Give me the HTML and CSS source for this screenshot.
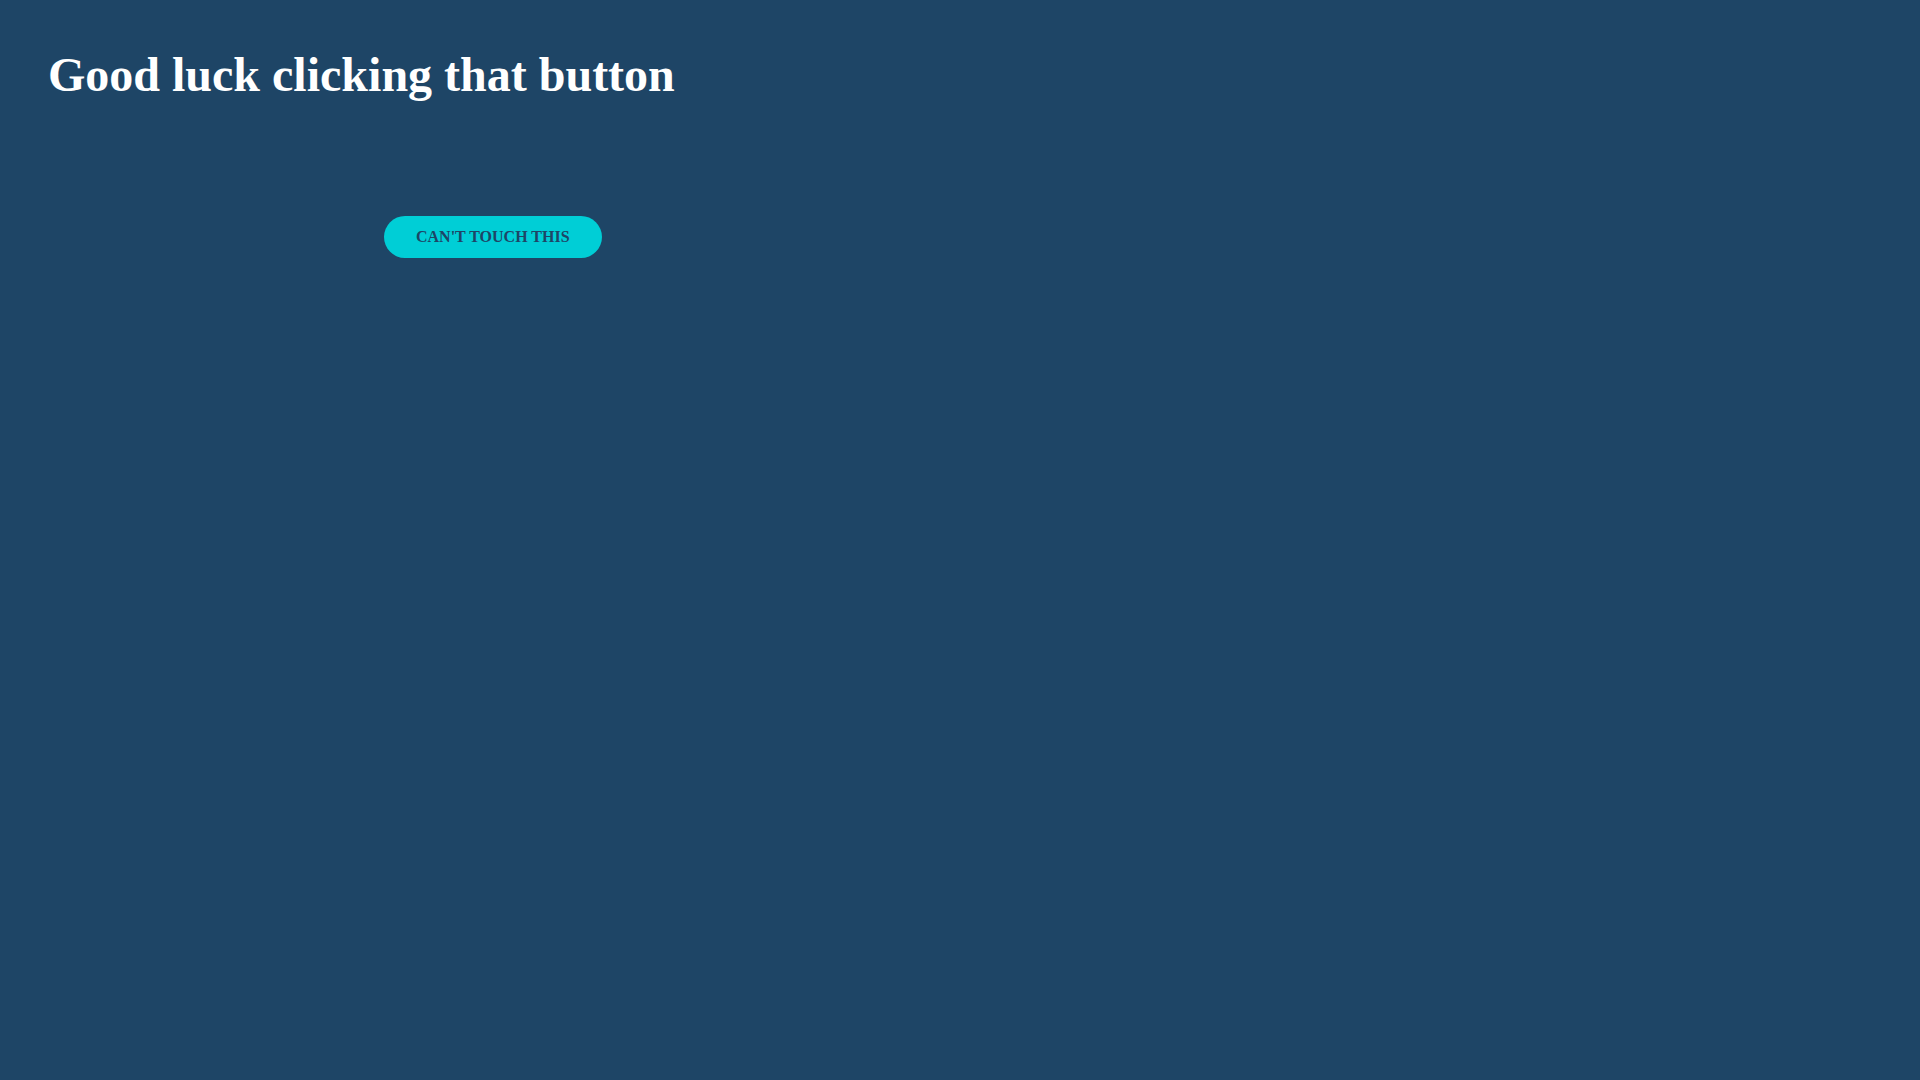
FILE: index.html
```html
<!DOCTYPE html>
<html>
<head>
<meta charset="utf-8">
<link rel="stylesheet" href="styles.css">
</head>
<body>
<main class="page">
  <h1 class="title">Good luck clicking that button</h1>
  <div class="stage">
    <button class="runaway">CAN'T TOUCH THIS</button>
  </div>
</main>
</body>
</html>
```
FILE: styles.css
```css
html, body {
  margin: 0;
  padding: 0;
  background: #1e4566;
  height: 100%;
}
.page {
  padding: 47px 48px 40px;
  font-family: "Liberation Serif", "Times New Roman", serif;
}
.title {
  margin: 0;
  color: #ffffff;
  font-size: 48px;
  font-weight: bold;
  line-height: 1.15;
}
.stage {
  padding-top: 114px;
  padding-left: 336px;
}
.runaway {
  display: block;
  height: 42px;
  padding: 0 32px;
  border: none;
  border-radius: 21px;
  background: #00ced6;
  color: #1e4566;
  font-family: "Liberation Serif", "Times New Roman", serif;
  font-size: 16px;
  font-weight: bold;
}
```
